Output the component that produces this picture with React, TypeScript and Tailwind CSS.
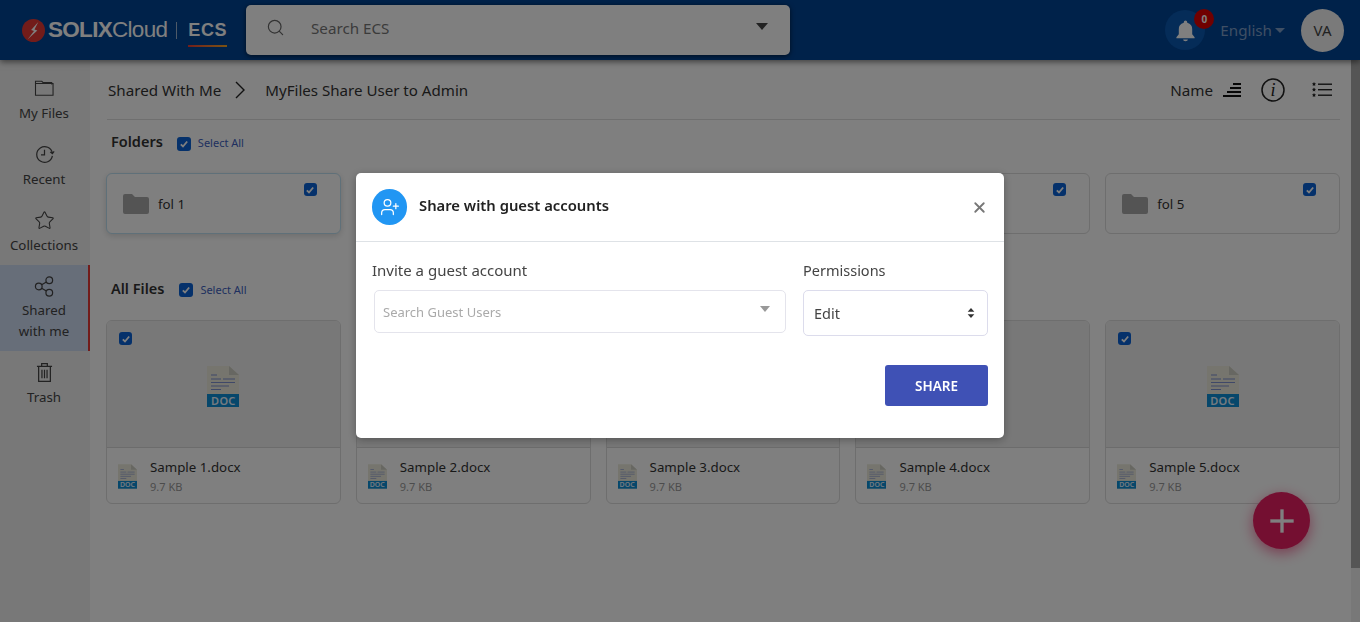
import React from "react";
import { Search, Star, X, Plus, UserPlus } from "lucide-react";

const Check = ({ size = 14 }: { size?: number }) => (
  <span className="inline-flex items-center justify-center rounded-[3px] bg-[#0b63d6]" style={{ width: size, height: size }}>
    <svg viewBox="0 0 12 12" className="w-[10px] h-[10px]" fill="none" stroke="#fff" strokeWidth="2.2">
      <path d="M2.2 6.4 4.8 9 9.8 3" />
    </svg>
  </span>
);

const FolderIcon = () => (
  <svg viewBox="0 0 26 20" className="w-[26px] h-[20px]" fill="#a9a9a9">
    <path d="M0 2a2 2 0 0 1 2-2h7l3 3h12a2 2 0 0 1 2 2v13a2 2 0 0 1-2 2H2a2 2 0 0 1-2-2z" />
  </svg>
);

const DocIcon = ({ w, h, small }: { w: number; h: number; small?: boolean }) => (
  <div className="relative" style={{ width: w, height: h }}>
    <svg viewBox="0 0 32 41" className="absolute inset-0 w-full h-full">
      <path d="M0 0h22l10 9v32H0z" fill="#ecebdc" />
      <path d="M22 0l10 9H22z" fill="#cfcfc4" />
      <g fill="#7f90d0">
        <rect x="4" y="8.500" width="6" height="1" />
        <rect x="4" y="12.500" width="10" height="1" />
        <rect x="16" y="12.500" width="12" height="1" />
        <rect x="4" y="16" width="24" height="1" />
        <rect x="4" y="19.500" width="18" height="1" />
        <rect x="4" y="23" width="10" height="1" />
      </g>
      <rect x="0" y="28" width="32" height="13" fill="#0d8fd6" />
    </svg>
    <span className={`absolute inset-x-0 bottom-0 text-center font-semibold leading-none text-[#e8f4ff] ${small ? "text-[7px] pb-[1px]" : "text-[11px] pb-[1px] tracking-[0.3px]"}`}>DOC</span>
  </div>
);

const NavItem = ({ icon, label, active }: { icon: React.ReactNode; label: React.ReactNode; active?: boolean }) => (
  <div className={`flex flex-col items-center text-center text-[13.3px] leading-[21px] text-[#444] border-r-2 pt-[9px] ${active ? "h-[86px] bg-[#cfdcf2] border-[#e53935]" : "h-[66px] border-transparent"}`}>
    <div className={`h-[24px] flex items-center justify-center ${active ? "mb-[2px]" : "mb-[3px]"}`}>{icon}</div>
    <div>{label}</div>
  </div>
);

const FolderCard = ({ name, active }: { name: string; active?: boolean }) => (
  <div className={`relative h-[61px] rounded-[6px] border bg-white flex items-center pl-[16px] gap-[9px] ${active ? "border-[#bfe0f2] shadow-[0_2px_6px_rgba(0,0,0,0.15)]" : "border-[#dcdcdc]"}`}>
    <FolderIcon />
    <span className="text-[13.3px] text-[#333] mt-[2px]">{name}</span>
    <span className="absolute right-[23px] top-[9px] flex"><Check size={13} /></span>
  </div>
);

const FileCard = ({ name }: { name: string }) => (
  <div className="h-[184px] rounded-[6px] border border-[#dcdcdc] bg-white overflow-hidden flex flex-col">
    <div className="relative h-[127px] bg-[#f1f1f1] border-b border-[#d8d8d8] flex justify-center pt-[45px]">
      <span className="absolute left-[12px] top-[11px] flex"><Check size={13} /></span>
      <DocIcon w={32} h={41} />
    </div>
    <div className="flex pl-[11px] pt-[10px] gap-[13px]">
      <div className="pt-[6px]"><DocIcon w={19} h={25} small /></div>
      <div>
        <div className="text-[13.3px] leading-[19px] text-[#333]">{name}</div>
        <div className="text-[11px] leading-[20px] text-[#999]">9.7 KB</div>
      </div>
    </div>
  </div>
);

export default function App() {
  return (
    <div className="relative h-[622px] w-[1360px] overflow-hidden bg-white font-['Noto_Sans','Open_Sans',sans-serif]">
      <header className="relative z-10 h-[60px] bg-[#004494] shadow-[0_2px_6px_rgba(0,0,0,0.5)] flex items-center pl-[22px] pr-[16px]">
        <div className="flex items-center w-[224px]">
          <svg viewBox="0 0 24 24" className="w-[23px] h-[23px] shrink-0">
            <circle cx="12" cy="12" r="12" fill="#e53935" />
            <path d="M17 3 9.500 11.500l3 1L6 21l10-9-3-1z" fill="#fff" />
          </svg>
          <span className="ml-[3px] font-['Liberation_Sans',sans-serif] font-bold text-[22.5px] tracking-[-0.7px] text-white">SOLIX</span>
          <span className="font-['Liberation_Sans',sans-serif] text-[22.5px] tracking-[-0.7px] text-white">Cloud</span>
          <span className="ml-[9px] mr-[11px] h-[17px] w-px bg-[#9db4d0]" />
          <span className="relative font-['Liberation_Sans',sans-serif] font-bold text-[18px] tracking-[0.6px] text-white">
            ECS
            <span className="absolute left-0 right-0 -bottom-[3px] h-[2px] bg-gradient-to-r from-[#e53935] to-[#f5a623]" />
          </span>
        </div>
        <div className="h-[50px] w-[544px] rounded-[5px] bg-white shadow-[0_1px_5px_rgba(0,0,0,0.6)] flex items-start pt-[13px] pl-[20px] pr-[22px] text-[#666]">
          <Search size={19} strokeWidth={1.5} />
          <span className="ml-[26px] text-[15.2px] leading-[21px] flex-1 text-[#777]">Search ECS</span>
          <span className="mt-[5px] w-0 h-0 border-x-[6px] border-x-transparent border-t-[7px] border-t-[#444]" />
        </div>
        <div className="ml-auto flex items-center">
          <div className="relative w-[40px] h-[40px] rounded-full bg-[#0a58b0] flex items-center justify-center">
            <svg viewBox="0 0 24 24" className="w-[23px] h-[27px]" fill="#fff">
              <path d="M12 1.5a1.8 1.8 0 0 1 1.8 1.8v.6A7 7 0 0 1 19 11v5l2.5 3v1h-19v-1L5 16v-5a7 7 0 0 1 5.200-7.100v-.6A1.800 1.800 0 0 1 12 1.500zM9.500 21.500h5a2.500 1.800 0 0 1-5 0z" />
            </svg>
            <span className="absolute -top-[1px] -right-[9px] w-[20px] h-[20px] rounded-full bg-[#e00000] text-white text-[10px] font-bold flex items-center justify-center">0</span>
          </div>
          <span className="ml-[15px] text-[15.2px] text-[#7f9fc8]">English</span>
          <span className="ml-[3px] w-0 h-0 border-x-[5px] border-x-transparent border-t-[5px] border-t-[#7f9fc8]" />
          <div className="ml-[16px] w-[43px] h-[43px] rounded-full bg-[#f4f4f4] text-[#444] text-[15px] flex items-center justify-center">VA</div>
        </div>
      </header>

      <div className="flex h-[562px]">
        <aside className="w-[90px] shrink-0 bg-[#f0f0f0] pt-[7px]">
          <NavItem label="My Files" icon={
            <svg viewBox="0 0 22 20" className="w-[21px] h-[18px]" fill="none" stroke="#444" strokeWidth="1.2">
              <path d="M1 5V2.500h7l1.500 1.500H19v2M1 5h19.500v13H1z" />
            </svg>} />
          <NavItem label="Recent" icon={
            <svg viewBox="0 0 24 24" className="w-[21px] h-[21px]" fill="none" stroke="#444" strokeWidth="1.4">
              <path d="M21 10.500A9 9 0 1 0 21 13.500M12 6.500V12.500H8M18.500 9l2.500 2 2-2.500" />
            </svg>} />
          <NavItem label="Collections" icon={<Star size={21} strokeWidth={1.2} color="#444" />} />
          <NavItem active label={<>Shared<br />with me</>} icon={
            <svg viewBox="0 0 22 22" className="w-[21px] h-[21px]" fill="none" stroke="#444" strokeWidth="1.300">
              <circle cx="5" cy="11" r="3.500" />
              <circle cx="16" cy="4.500" r="3.500" />
              <circle cx="16" cy="17.500" r="3.500" />
              <path d="M8 9.200l5-3M8 12.800l5 3" />
            </svg>} />
          <NavItem label="Trash" icon={
            <svg viewBox="0 0 18 22" className="w-[17px] h-[21px]" fill="none" stroke="#444" strokeWidth="1.300">
              <path d="M1 4.500h16M6 4.500V1.500h6v3M2.800 4.500V20.500h12.400V4.500M6.300 8v9M9 8v9M11.700 8v9" />
            </svg>} />
        </aside>

        <main className="flex-1 pl-[16px] pr-[20px] text-[#333]">
          <div className="ml-[1px] h-[60px] border-b border-[#dedede] flex items-center pt-[1px]">
            <span className="ml-[1px] text-[15.2px]">Shared With Me</span>
            <svg viewBox="0 0 10 18" className="ml-[14px] mr-[20px] w-[10px] h-[18px]" fill="none" stroke="#222" strokeWidth="1.400">
              <path d="M1 1l8 8-8 8" />
            </svg>
            <span className="text-[15.100px]">MyFiles Share User to Admin</span>
            <div className="ml-auto flex items-center pr-[8px]">
              <span className="text-[15.200px]">Name</span>
              <svg viewBox="0 0 18 14" className="ml-[10px] w-[18px] h-[14px]" fill="#111">
                <rect x="10" y="0" width="8" height="2" />
                <rect x="7" y="4" width="11" height="2" />
                <rect x="4" y="8" width="14" height="2" />
                <rect x="0" y="12" width="18" height="2" />
              </svg>
              <svg viewBox="0 0 24 24" className="ml-[20px] w-[24px] h-[24px]" fill="none">
                <circle cx="12" cy="12" r="11" stroke="#222" strokeWidth="1.500" />
                <text x="12" y="18" textAnchor="middle" fontFamily="Liberation Serif, serif" fontStyle="italic" fontSize="18" fill="#222">i</text>
              </svg>
              <svg viewBox="0 0 20 16" className="ml-[27px] w-[20px] h-[16px]" fill="#222">
                <rect x="6" y="1.500" width="14" height="1.400" />
                <rect x="6" y="7" width="14" height="1.400" />
                <rect x="6" y="12.500" width="14" height="1.400" />
                <path d="M2 0l.7 1.300 1.300.2-1 1 .3 1.400L2 3.200.7 3.900 1 2.500 0 1.500l1.300-.2zM2 5.500l.7 1.300 1.300.2-1 1 .3 1.400L2 8.700.7 9.400 1 8 0 7l1.300-.2zM2 11l.7 1.300 1.300.2-1 1 .3 1.400L2 14.200.7 14.900 1 13.500 0 12.500l1.300-.2z" />
              </svg>
            </div>
          </div>

          <div className="h-[43px] flex items-center pl-[5px] pt-[1px]">
            <span className="text-[14.5px] font-semibold text-[#333]">Folders</span>
            <span className="ml-[14px] mt-[3px] flex"><Check size={14} /></span>
            <span className="ml-[7px] mt-[3px] text-[11px] text-[#3f5fc0]">Select All</span>
          </div>
          <div className="mt-[10px] grid grid-cols-5 gap-x-[15px]">
            <FolderCard name="fol 1" active />
            <FolderCard name="fol 2" />
            <FolderCard name="fol 3" />
            <FolderCard name="fol 4" />
            <FolderCard name="fol 5" />
          </div>

          <div className="mt-[33px] h-[43px] flex items-center pl-[5px]">
            <span className="text-[14.5px] font-semibold text-[#333]">All Files</span>
            <span className="ml-[15px] mt-[3px] flex"><Check size={14} /></span>
            <span className="ml-[7px] mt-[3px] text-[11px] text-[#3f5fc0]">Select All</span>
          </div>
          <div className="mt-[10px] grid grid-cols-5 gap-x-[15px]">
            <FileCard name="Sample 1.docx" />
            <FileCard name="Sample 2.docx" />
            <FileCard name="Sample 3.docx" />
            <FileCard name="Sample 4.docx" />
            <FileCard name="Sample 5.docx" />
          </div>
        </main>
      </div>

      <div className="absolute right-0 top-[60px] bottom-0 w-[9px] bg-[#f0f0f0]">
        <div className="h-[508px] bg-[#ababab]" />
      </div>

      <button className="absolute left-[1253px] top-[492px] w-[57px] h-[57px] rounded-full bg-[#e91e63] shadow-[0_4px_14px_rgba(233,30,99,0.6)] flex items-center justify-center text-white">
        <Plus size={40} strokeWidth={2} strokeLinecap="butt" />
      </button>

      <div className="fixed inset-0 z-20 bg-black/50 flex justify-center pt-[173px]">
        <div className="w-[648px] h-[265px] bg-white rounded-[5px] shadow-[0_2px_8px_rgba(0,0,0,0.3)]">
          <div className="h-[69px] border-b border-[#dee2e6] flex items-center pl-[16px] pr-[18px]">
            <div className="w-[35px] h-[36px] rounded-full bg-[#2196f3] flex items-center justify-center">
              <UserPlus size={20} strokeWidth={1.5} color="#fff" />
            </div>
            <span className="ml-[12px] text-[14.800px] font-semibold text-[#222] -mt-[4px]">Share with guest accounts</span>
            <X size={17} strokeWidth={2.6} className="ml-auto -mr-[2px] text-[#777]" />
          </div>
          <div className="flex px-[16px] pt-[16px]">
            <div className="w-[414px]">
              <div className="text-[15px] leading-[24px] text-[#444]">Invite a guest account</div>
              <div className="relative mt-[8px] ml-[2px] h-[43px] w-[412px] border border-[#e4e4ec] rounded-[5px] flex items-center pl-[8px] pt-[3px] text-[13px] text-[#aaa]">
                Search Guest Users
                <span className="absolute right-[15px] top-[15px] w-0 h-0 border-x-[5px] border-x-transparent border-t-[6px] border-t-[#999]" />
              </div>
            </div>
            <div className="ml-[17px] w-[185px]">
              <div className="text-[14.500px] leading-[24px] text-[#444]">Permissions</div>
              <div className="relative mt-[8px] h-[46px] border border-[#dcdcec] rounded-[5px] flex items-center pl-[10px] pt-[1px] text-[14.500px] text-[#444]">
                Edit
                <svg viewBox="0 0 8 12" className="absolute right-[12px] top-[17px] w-[8px] h-[10px]" fill="#333">
                  <path d="M4 0l4 4.500H0zM4 12 0 7.500h8z" />
                </svg>
              </div>
            </div>
          </div>
          <div className="flex justify-end pr-[16px] mt-[29px]">
            <div className="w-[103px] h-[41px] bg-[#3f51b5] rounded-[3px] text-white text-[13.500px] font-semibold flex items-center justify-center pt-[1px]">SHARE</div>
          </div>
        </div>
      </div>
    </div>
  );
}
